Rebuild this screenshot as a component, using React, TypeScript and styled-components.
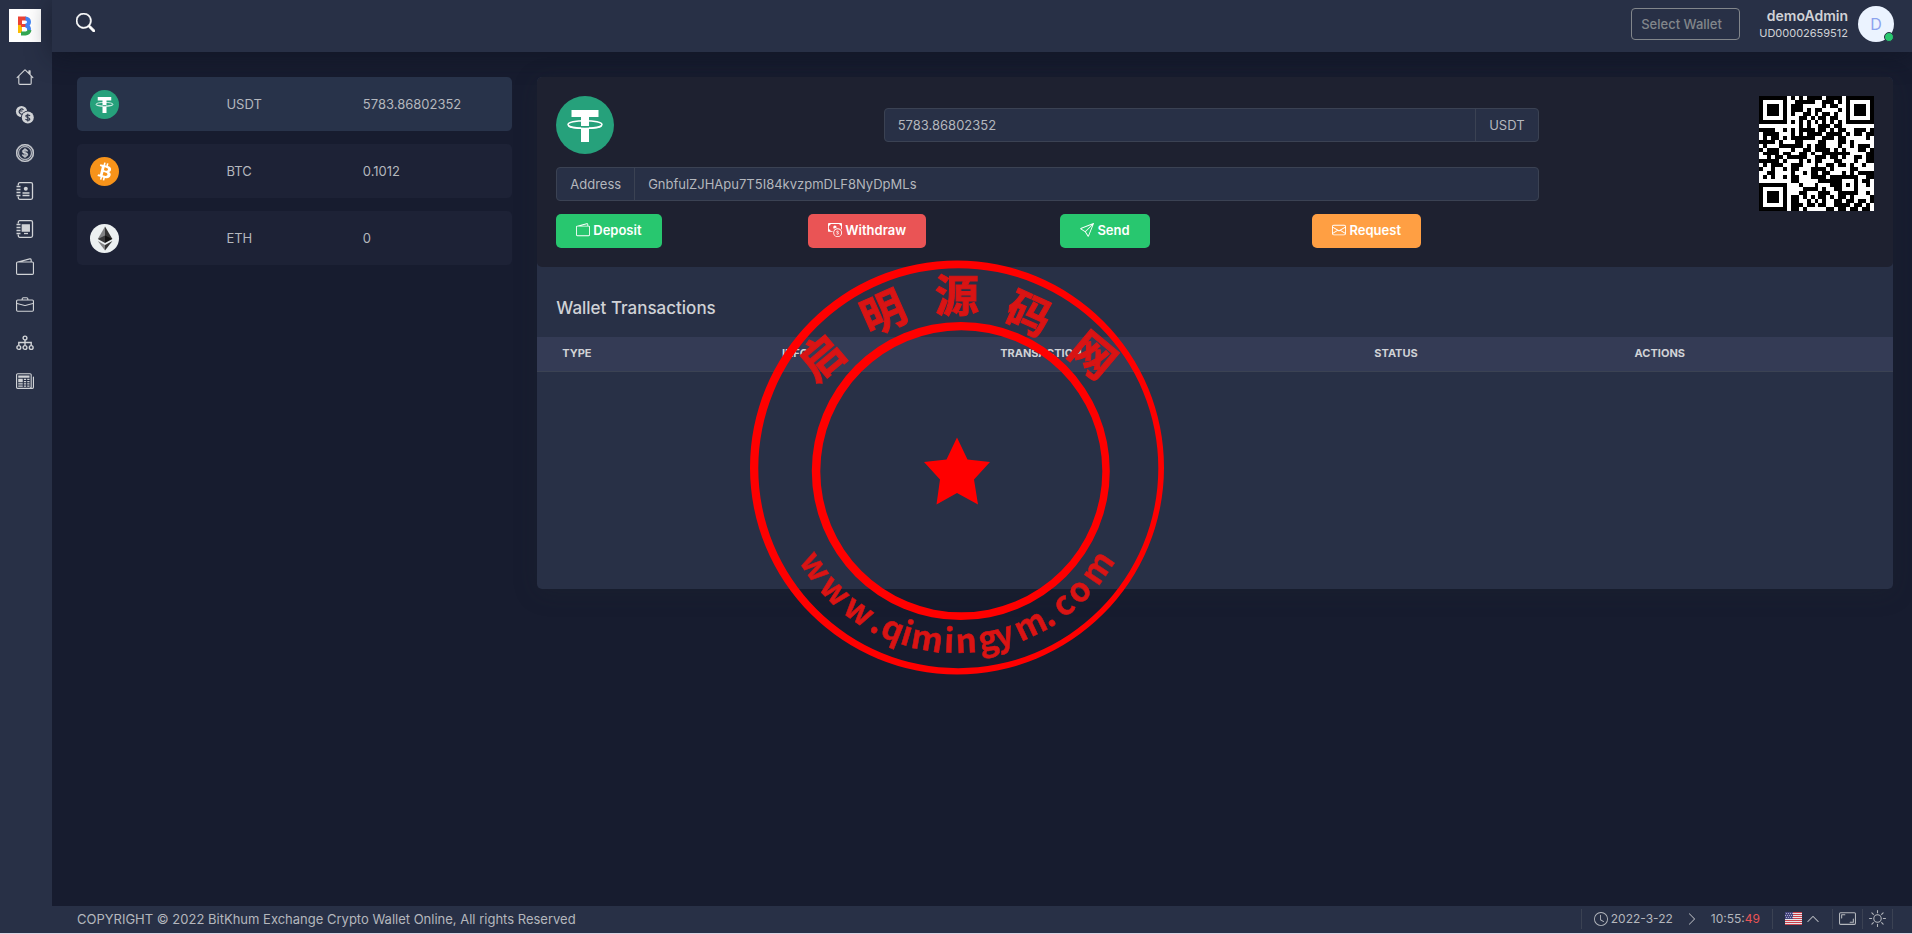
import React from 'react';
import styled, { createGlobalStyle } from 'styled-components';
import {
  BsHouse, BsCoin, BsWallet2, BsBriefcase, BsNewspaper, BsSearch, BsCashCoin, BsSend,
  BsEnvelope, BsClock, BsChevronRight, BsChevronUp, BsAspectRatio, BsBrightnessHigh,
} from 'react-icons/bs';

const color = {
  page: '#171c2f',
  bar: '#283046',
  card: '#1e2130',
  row: '#1d2236',
  rowActive: '#28334a',
  thead: '#343b55',
  line: '#3b4253',
  text: '#b4b7bd',
  strong: '#d0d2d6',
  green: '#28c76f',
  red: '#ea5455',
  orange: '#ff9f43',
};

const GlobalStyle = createGlobalStyle`
  * { box-sizing: border-box; }
  body {
    margin: 0;
    background: ${color.page};
    color: ${color.text};
    font: 13px/20px Inter, "Noto Sans CJK SC", sans-serif;
  }
  button, input { font: inherit; }
`;

/* ---------- page frame ---------- */

const Page = styled.div`
  display: grid;
  grid-template-columns: 52px minmax(0, 1fr);
  min-height: 100vh;
  border-bottom: 1px solid #d9d5e3;
`;

const Sidebar = styled.aside`
  display: flex;
  flex-direction: column;
  align-items: center;
  padding: 9px 2px 0 0;
  background: ${color.bar};
`;

const Brand = styled.a`
  display: grid;
  place-items: center;
  width: 32px;
  height: 33px;
  margin-bottom: 16px;
  background: #fff;
`;

const SideLink = styled.a`
  display: grid;
  place-items: center;
  width: 50px;
  height: 38px;
  color: ${color.strong};
`;

const Column = styled.div`
  display: flex;
  flex-direction: column;
`;

const Header = styled.header`
  display: flex;
  align-items: center;
  height: 52px;
  padding: 0 18px 0 24px;
  background: ${color.bar};
  box-shadow: 0 4px 24px rgba(15, 20, 34, 0.6);
`;

const SearchButton = styled.button`
  display: grid;
  margin: 0 auto 8px 0;
  padding: 0;
  border: 0;
  background: none;
  color: #fff;
`;

const WalletButton = styled.button`
  width: 109px;
  height: 32px;
  margin: 0 19px 4px 0;
  padding: 0 9px;
  border: 1px solid #82868b;
  border-radius: 4px;
  background: none;
  color: #82868b;
  font-weight: 500;
  text-align: left;
  white-space: nowrap;
`;

const User = styled.div`
  display: flex;
  align-items: center;
  gap: 10px;
  margin-bottom: 4px;
`;

const UserText = styled.div`
  display: flex;
  flex-direction: column;
  text-align: right;
  font-size: 11px;
  line-height: 16px;
  color: ${color.strong};
`;

const UserName = styled.strong`
  font-size: 14px;
  line-height: 18px;
  font-weight: 600;
`;

const Avatar = styled.span`
  position: relative;
  display: grid;
  place-items: center;
  width: 36px;
  height: 36px;
  border-radius: 50%;
  background: #ebf3ff;
  color: #8ba3ee;
  font-size: 16px;
`;

const Online = styled.span`
  position: absolute;
  right: 0;
  bottom: 0;
  width: 10px;
  height: 10px;
  border: 1px solid ${color.bar};
  border-radius: 50%;
  background: ${color.green};
`;

const Main = styled.main`
  flex: 1;
  display: grid;
  grid-template-columns: repeat(12, minmax(0, 1fr));
  gap: 25px;
  align-items: start;
  padding: 25px 19px 25px 25px;
`;

/* ---------- coin list ---------- */

const Coins = styled.div`
  grid-column: span 3;
  display: grid;
  gap: 13px;
`;

const CoinRow = styled.a<{ $active?: boolean }>`
  display: grid;
  grid-template-columns: repeat(3, 1fr);
  align-items: center;
  height: 54px;
  padding: 0 13px;
  border-radius: 5px;
  background: ${p => (p.$active ? color.rowActive : color.row)};
  color: ${color.text};
  text-decoration: none;
`;

/* ---------- wallet panel ---------- */

const Panel = styled.section`
  grid-column: span 9;
  min-height: 512px;
  border-radius: 5px;
  background: ${color.bar};
  box-shadow: 0 4px 24px rgba(34, 41, 47, 0.24);
  overflow: hidden;
`;

const Summary = styled.div`
  display: grid;
  grid-template-columns: minmax(0, 3fr) minmax(0, 1fr);
  padding: 19px;
  border-radius: 5px;
  background: ${color.card};
`;

const Details = styled.div`
  display: grid;
  gap: 13px;
  padding-right: 6px;
`;

const Balance = styled.div`
  display: grid;
  grid-template-columns: 1fr 2fr;
  align-items: center;
  height: 58px;
`;

const InputGroup = styled.div`
  display: flex;
  height: 34px;
  border: 1px solid ${color.line};
  border-radius: 4px;
  background: ${color.bar};
`;

const Addon = styled.label`
  display: flex;
  align-items: center;
  padding: 0 13px;
`;

const Field = styled.input<{ $line: 'left' | 'right' }>`
  flex: 1;
  min-width: 0;
  padding: 0 13px;
  border: 0;
  border-${p => p.$line}: 1px solid ${color.line};
  background: none;
  color: ${color.text};
  outline: none;
`;

const Actions = styled.div`
  display: grid;
  grid-template-columns: repeat(4, 1fr);
  column-gap: 26px;
  justify-items: start;
`;

const Action = styled.button<{ $tone: string }>`
  display: flex;
  align-items: center;
  gap: 3px;
  height: 34px;
  padding: 0 20px 3px;
  border: 0;
  border-radius: 5px;
  background: ${p => p.$tone};
  color: #fff;
  font-weight: 600;
`;

const QrBox = styled.div`
  display: flex;
  justify-content: flex-end;
`;

const Title = styled.h4`
  margin: 0;
  padding: 29px 19px 17px;
  color: ${color.strong};
  font-size: 17px;
  line-height: 24px;
  font-weight: 500;
`;

const Table = styled.table`
  width: 100%;
  table-layout: fixed;
  border-collapse: collapse;
`;

const Th = styled.th`
  height: 34px;
  padding: 0 25px 2px;
  border-bottom: 1px solid ${color.line};
  background: ${color.thead};
  color: ${color.strong};
  font-size: 11px;
  line-height: 16px;
  font-weight: 700;
  text-align: left;
  text-transform: uppercase;
`;

/* ---------- footer ---------- */

const Footer = styled.footer`
  display: flex;
  align-items: center;
  justify-content: space-between;
  height: 27px;
  padding: 0 19px 2px 25px;
  background: ${color.bar};
`;

const Tools = styled.div`
  display: flex;
  align-items: center;
  height: 20px;
  font-size: 12px;
`;

const Cell = styled.div<{ $gap?: number; $pad: number }>`
  display: flex;
  align-items: center;
  gap: ${p => p.$gap ?? 0}px;
  height: 20px;
  padding: 0 ${p => p.$pad}px;
  border-left: 1px solid ${color.line};
`;

const Tool = styled.button`
  display: flex;
  align-items: center;
  gap: 4px;
  padding: 0;
  border: 0;
  background: none;
  color: inherit;
`;

const LastTool = styled(Cell)`
  border-right: 1px solid ${color.line};
`;

const Now = styled.span`
  display: flex;
  align-items: center;
  gap: 3px;
`;

const Seconds = styled.span`
  color: ${color.red};
`;

const Stamp = styled.svg`
  position: fixed;
  inset: 0;
  margin: auto;
  width: 420px;
  height: 420px;
  pointer-events: none;
  font-family: "Noto Sans CJK SC", sans-serif;
  font-weight: 700;
`;

/* ---------- icons ---------- */

const Logo = () => (
  <svg width="16" height="22" viewBox="0 0 16 22" fill="none" strokeWidth="4">
    <path d="M1 3.500h8" stroke="#ea4335" />
    <path d="M3 2v8" stroke="#ea4335" />
    <path d="M3 10v8" stroke="#fbbc05" />
    <path d="M4 10.500h5" stroke="#ea4335" strokeWidth="3" />
    <path d="M8.500 3.500a3.500 3.500 0 0 1 0 7a4 4 0 0 1 3.500 5" stroke="#4285f4" />
    <path d="M4 18.500h4.500a4 4 0 0 0 4-3.500" stroke="#34a853" />
  </svg>
);

const CoinsIcon = () => (
  <svg width="20" height="20" viewBox="0 0 20 20">
    <circle cx="6.500" cy="6.500" r="5.600" fill="currentColor" />
    <path d="M8.500 4.800a2.500 2.500 0 1 0 0 3.600M5 6h2.500" fill="none" stroke={color.bar} strokeWidth="1.100" />
    <circle cx="12.800" cy="12.600" r="6.900" fill={color.bar} />
    <circle cx="12.800" cy="12.600" r="6" fill="currentColor" />
    <path d="M15 10.900c-.5-1-3.800-1.300-4.200.1-.4 1.600 4.200 1.300 4.100 3.100-.1 1.600-3.700 1.500-4.400 0M12.800 8.700v7.800" fill="none" stroke={color.bar} strokeWidth="1.100" />
  </svg>
);

const Notebook = ({ children }: { children: React.ReactNode }) => (
  <svg width="18" height="18" viewBox="0 0 18 18" fill="none" stroke="currentColor" strokeWidth="1.300">
    <path d="M2.300 3.500V2.200a1.500 1.500 0 0 1 1.500-1.500H15a1.500 1.500 0 0 1 1.500 1.500v13.600a1.500 1.500 0 0 1-1.500 1.500H3.800a1.500 1.500 0 0 1-1.500-1.500v-1.300" />
    <path d="M.5 4.500h4M.5 7.500h4M.5 10.500h4M.5 13.500h4" />
    {children}
  </svg>
);

const ContactIcon = () => (
  <Notebook>
    <circle cx="9.800" cy="6.800" r="2" fill="currentColor" stroke="none" />
    <path d="M6.500 11h7M6.500 13.500h7" />
  </Notebook>
);

const LedgerIcon = () => (
  <Notebook>
    <path d="M6.300 5h7v6h-7z" fill="currentColor" />
    <path d="M8 13.500h4" />
  </Notebook>
);

const NetworkIcon = () => (
  <svg width="18" height="18" viewBox="0 0 18 18" fill="none" stroke="currentColor" strokeWidth="1.400">
    <circle cx="9" cy="4" r="1.900" />
    <circle cx="2.800" cy="13.500" r="1.900" />
    <circle cx="9" cy="13.500" r="1.900" />
    <circle cx="15.200" cy="13.500" r="1.900" />
    <path d="M9 6v5.500M2.800 11.500V8.500h12.400v3" />
  </svg>
);

const Usdt = ({ size }: { size: number }) => (
  <svg width={size} height={size} viewBox="0 0 58 58">
    <circle cx="29" cy="29" r="29" fill="#26a17b" />
    <path d="M15.500 14h27v7h-9.500v25h-8V21h-9.500z" fill="#fff" />
    <ellipse cx="29" cy="28.500" rx="17" ry="3.800" fill="none" stroke="#fff" strokeWidth="1.500" />
    <path d="M25 30h8v2.800h-8z" fill="#26a17b" />
    <path d="M12.500 30c3 3.200 30 3.200 33 0" fill="none" stroke="#fff" strokeWidth="1.300" />
  </svg>
);

const Btc = () => (
  <svg width="29" height="29" viewBox="0 0 32 32">
    <circle cx="16" cy="16" r="16" fill="#f7931a" />
    <path
      fill="#fff"
      d="M23.189 14.020c.314-2.096-1.283-3.223-3.465-3.975l.708-2.840-1.728-.430-.690 2.765c-.454-.114-.920-.220-1.385-.326l.695-2.783L15.596 6l-.708 2.839c-.376-.086-.746-.170-1.104-.260l.002-.009-2.384-.595-.460 1.846s1.283.294 1.256.312c.700.175.826.638.805 1.006l-.806 3.235c.048.012.110.030.180.057l-.183-.045-1.130 4.532c-.086.212-.303.531-.793.410.018.025-1.256-.313-1.256-.313l-.858 1.978 2.250.561c.418.105.828.215 1.231.318l-.715 2.872 1.727.430.708-2.840c.472.127.930.245 1.378.357l-.706 2.828 1.728.430.715-2.866c2.948.558 5.164.333 6.097-2.333.752-2.146-.037-3.385-1.588-4.192 1.130-.260 1.980-1.003 2.207-2.538zm-3.950 5.538c-.533 2.147-4.148.986-5.320.695l.950-3.805c1.172.293 4.929.872 4.370 3.110zm.535-5.569c-.487 1.953-3.495.960-4.470.717l.860-3.450c.975.243 4.118.696 3.610 2.733z"
    />
  </svg>
);

const Eth = () => (
  <svg width="29" height="29" viewBox="0 0 29 29">
    <circle cx="14.500" cy="14.500" r="14.500" fill="#ecf0f1" />
    <path d="M15 2.500v12.500H7.800z" fill="#828384" />
    <path d="M15 2.500v12.500h7.400z" fill="#343434" />
    <path d="M7.800 15 15 11.500V19z" fill="#3a3a3b" />
    <path d="M22.400 15 15 11.500V19z" fill="#141414" />
    <path d="M7.800 17 15 21v5.500z" fill="#828384" />
    <path d="M22.400 17 15 21v5.500z" fill="#343434" />
  </svg>
);

const Flag = () => (
  <svg width="17" height="13" viewBox="0 0 17 13">
    <path fill="#e4e4ea" d="M0 0h17v13H0z" />
    <path stroke="#c8414b" d="M0 .5h17M0 2.500h17M0 4.500h17M0 6.500h17M0 8.500h17M0 10.500h17M0 12.500h17" />
    <path fill="#46467f" d="M0 0h8v7H0z" />
    <path stroke="#a9a9c9" strokeDasharray="1 1" d="M1 1.500h7M0 3.500h7M1 5.500h7" />
  </svg>
);

/* ---------- QR code (version 3, level L, byte mode) ---------- */

const SIZE = 29;

function gfMul(a: number, b: number) {
  let z = 0;
  for (let i = 7; i >= 0; i--) {
    z = (z << 1) ^ ((z >>> 7) * 0x11d);
    z ^= ((b >>> i) & 1) * a;
  }
  return z & 255;
}

function qrCodewords(text: string) {
  const dataLength = 55;
  const eccLength = 15;
  const bits: number[] = [];
  const put = (value: number, n: number) => {
    for (let i = n - 1; i >= 0; i--) bits.push((value >>> i) & 1);
  };
  put(4, 4);
  put(text.length, 8);
  for (const c of text) put(c.charCodeAt(0), 8);
  put(0, 4);

  const data: number[] = [];
  for (let i = 0; i < bits.length; i += 8) data.push(parseInt(bits.slice(i, i + 8).join(''), 2));
  for (let pad = 236; data.length < dataLength; pad ^= 236 ^ 17) data.push(pad);

  const divisor: number[] = new Array(eccLength).fill(0);
  divisor[eccLength - 1] = 1;
  let root = 1;
  for (let i = 0; i < eccLength; i++) {
    for (let j = 0; j < eccLength; j++) {
      divisor[j] = gfMul(divisor[j], root);
      if (j + 1 < eccLength) divisor[j] ^= divisor[j + 1];
    }
    root = gfMul(root, 2);
  }
  const ecc: number[] = new Array(eccLength).fill(0);
  for (const byte of data) {
    const factor = byte ^ (ecc.shift() as number);
    ecc.push(0);
    divisor.forEach((c, i) => { ecc[i] ^= gfMul(c, factor); });
  }
  return data.concat(ecc);
}

function qrPath(text: string) {
  const words = qrCodewords(text);
  const dark = Array.from({ length: SIZE }, () => new Array<boolean>(SIZE).fill(false));
  const fixed = Array.from({ length: SIZE }, () => new Array<boolean>(SIZE).fill(false));
  const set = (x: number, y: number, on: boolean) => {
    if (x < 0 || y < 0 || x >= SIZE || y >= SIZE) return;
    dark[y][x] = on;
    fixed[y][x] = true;
  };

  for (let i = 0; i < SIZE; i++) {
    set(6, i, i % 2 === 0);
    set(i, 6, i % 2 === 0);
  }
  for (const [cx, cy] of [[3, 3], [SIZE - 4, 3], [3, SIZE - 4]]) {
    for (let y = -4; y <= 4; y++) {
      for (let x = -4; x <= 4; x++) {
        const ring = Math.max(Math.abs(x), Math.abs(y));
        set(cx + x, cy + y, ring !== 2 && ring !== 4);
      }
    }
  }
  for (let y = -2; y <= 2; y++) {
    for (let x = -2; x <= 2; x++) set(22 + x, 22 + y, Math.max(Math.abs(x), Math.abs(y)) !== 1);
  }

  const format = 0b111100010011101;
  const bit = (i: number) => ((format >>> i) & 1) === 1;
  for (let i = 0; i <= 5; i++) set(8, i, bit(i));
  set(8, 7, bit(6));
  set(8, 8, bit(7));
  set(7, 8, bit(8));
  for (let i = 9; i < 15; i++) set(14 - i, 8, bit(i));
  for (let i = 0; i < 8; i++) set(SIZE - 1 - i, 8, bit(i));
  for (let i = 8; i < 15; i++) set(8, SIZE - 15 + i, bit(i));
  set(8, SIZE - 8, true);

  let i = 0;
  for (let right = SIZE - 1; right >= 1; right -= 2) {
    if (right === 6) right = 5;
    for (let v = 0; v < SIZE; v++) {
      for (let j = 0; j < 2; j++) {
        const x = right - j;
        const y = ((right + 1) & 2) === 0 ? SIZE - 1 - v : v;
        if (fixed[y][x]) continue;
        const on = i < words.length * 8 && ((words[i >>> 3] >>> (7 - (i & 7))) & 1) === 1;
        dark[y][x] = on !== ((x + y) % 3 === 0);
        i++;
      }
    }
  }
  return dark.map((row, y) => row.map((on, x) => (on ? `M${x} ${y}h1v1h-1z` : '')).join('')).join('');
}

const QrCode = ({ text }: { text: string }) => (
  <svg width="115" height="115" viewBox="0 0 29 29" shapeRendering="crispEdges" role="img" aria-label="Wallet address QR code">
    <path fill="#fff" d="M0 0h29v29H0z" />
    <path fill="#000" d={qrPath(text)} />
  </svg>
);

/* ---------- seal ---------- */

const circle = (cx: number, cy: number, r: number) =>
  `M${cx - r} ${cy}a${r} ${r} 0 1 0 ${2 * r} 0a${r} ${r} 0 1 0 ${-2 * r} 0z`;

const sealTop: [string, number, number, number][] = [
  ['启', 90, 115, -40], ['明', 152, 70, -24], ['源', 227, 53, 0], ['码', 300, 71, 24], ['网', 365, 113, 40],
];

const sealBottom: [string, number][] = [
  ['w', 56], ['w', 45.5], ['w', 35], ['.', 27.5], ['q', 22], ['i', 17], ['m', 10], ['i', 2.6],
  ['n', -3.1], ['g', -10.5], ['y', -16], ['m', -25.5], ['.', -32], ['c', -38.5], ['o', -45.5], ['m', -55.5],
];

const Seal = () => (
  <Stamp viewBox="16 17 420 420">
    <g fill="#f00">
      <path fillRule="evenodd" d={circle(227, 227.5, 207) + circle(228.3, 228.2, 200)} />
      <path fillRule="evenodd" d={circle(230.8, 231, 149) + circle(231.3, 231.3, 141)} />
      <path d="M227 197.500l10.500 22 22.500 2.500-16 17.500 4 25-21-11.500-20.500 11.500 3.500-25-16-17.500 22.500-2.500z" />
    </g>
    <g fill="#d91414" stroke="#d91414" textAnchor="middle">
      {sealTop.map(([char, x, y, angle]) => (
        <text key={char} fontSize="44" strokeWidth="1" dominantBaseline="central" transform={`translate(${x} ${y}) rotate(${angle})`}>
          {char}
        </text>
      ))}
      {sealBottom.map(([char, angle], i) => (
        <text key={i} fontSize="33" strokeWidth="0.5" transform={`rotate(${angle} 227 231) translate(227 413)`}>
          {char}
        </text>
      ))}
    </g>
  </Stamp>
);

/* ---------- page ---------- */

const ADDRESS = 'GnbfulZJHApu7T5I84kvzpmDLF8NyDpMLs';

const links = [
  { label: 'Home', icon: <BsHouse size={18} /> },
  { label: 'Exchange', icon: <CoinsIcon /> },
  { label: 'Coins', icon: <BsCoin size={18} stroke="currentColor" strokeWidth={0.4} /> },
  { label: 'Contacts', icon: <ContactIcon /> },
  { label: 'Ledger', icon: <LedgerIcon /> },
  { label: 'Wallet', icon: <BsWallet2 size={18} /> },
  { label: 'Portfolio', icon: <BsBriefcase size={18} /> },
  { label: 'Network', icon: <NetworkIcon /> },
  { label: 'News', icon: <BsNewspaper size={18} /> },
];

const coins = [
  { name: 'USDT', amount: '5783.86802352', icon: <Usdt size={29} /> },
  { name: 'BTC', amount: '0.1012', icon: <Btc /> },
  { name: 'ETH', amount: '0', icon: <Eth /> },
];

const actions = [
  { label: 'Deposit', tone: color.green, icon: <BsWallet2 size={14} /> },
  { label: 'Withdraw', tone: color.red, icon: <BsCashCoin size={14} /> },
  { label: 'Send', tone: color.green, icon: <BsSend size={14} /> },
  { label: 'Request', tone: color.orange, icon: <BsEnvelope size={14} /> },
];

const columns = [
  { label: 'Type', width: '16.2%' },
  { label: 'Info', width: '16.1%' },
  { label: 'Transaction', width: '27.6%' },
  { label: 'Status', width: '19.2%' },
  { label: 'Actions', width: '20.9%' },
];

export default function App() {
  return (
    <>
      <GlobalStyle />
      <Page>
        <Sidebar>
          <Brand href="#" aria-label="BitKhum"><Logo /></Brand>
          {links.map(link => (
            <SideLink key={link.label} href="#" aria-label={link.label}>{link.icon}</SideLink>
          ))}
        </Sidebar>
        <Column>
          <Header>
            <SearchButton aria-label="Search"><BsSearch size={19} stroke="currentColor" strokeWidth={0.5} /></SearchButton>
            <WalletButton aria-haspopup="listbox">Select Wallet</WalletButton>
            <User>
              <UserText>
                <UserName>demoAdmin</UserName>
                UD00002659512
              </UserText>
              <Avatar>D<Online /></Avatar>
            </User>
          </Header>
          <Main>
            <Coins>
              {coins.map((coin, i) => (
                <CoinRow key={coin.name} href="#" $active={i === 0}>
                  {coin.icon}
                  <span>{coin.name}</span>
                  <span>{coin.amount}</span>
                </CoinRow>
              ))}
            </Coins>
            <Panel>
              <Summary>
                <Details>
                  <Balance>
                    <Usdt size={58} />
                    <InputGroup>
                      <Field id="balance" $line="right" defaultValue="5783.86802352" readOnly />
                      <Addon htmlFor="balance">USDT</Addon>
                    </InputGroup>
                  </Balance>
                  <InputGroup>
                    <Addon htmlFor="address">Address</Addon>
                    <Field id="address" $line="left" defaultValue={ADDRESS} readOnly />
                  </InputGroup>
                  <Actions>
                    {actions.map(action => (
                      <Action key={action.label} $tone={action.tone}>{action.icon}{action.label}</Action>
                    ))}
                  </Actions>
                </Details>
                <QrBox><QrCode text={ADDRESS} /></QrBox>
              </Summary>
              <Title>Wallet Transactions</Title>
              <Table>
                <colgroup>
                  {columns.map(column => <col key={column.label} width={column.width} />)}
                </colgroup>
                <thead>
                  <tr>{columns.map(column => <Th key={column.label}>{column.label}</Th>)}</tr>
                </thead>
              </Table>
            </Panel>
          </Main>
          <Footer>
            <span>COPYRIGHT © 2022 BitKhum Exchange Crypto Wallet Online, All rights Reserved</span>
            <Tools>
              <Cell $pad={12} $gap={12}>
                <Now><BsClock size={14} />2022-3-22</Now>
                <BsChevronRight size={14} />
                <span>10:55:<Seconds>49</Seconds></span>
              </Cell>
              <Cell $pad={12}>
                <Tool aria-label="Language"><Flag /><BsChevronUp size={14} /></Tool>
              </Cell>
              <Cell $pad={6}>
                <Tool aria-label="Full screen"><BsAspectRatio size={17} /></Tool>
              </Cell>
              <LastTool $pad={6}>
                <Tool aria-label="Light theme"><BsBrightnessHigh size={17} /></Tool>
              </LastTool>
            </Tools>
          </Footer>
        </Column>
      </Page>
      <Seal />
    </>
  );
}
